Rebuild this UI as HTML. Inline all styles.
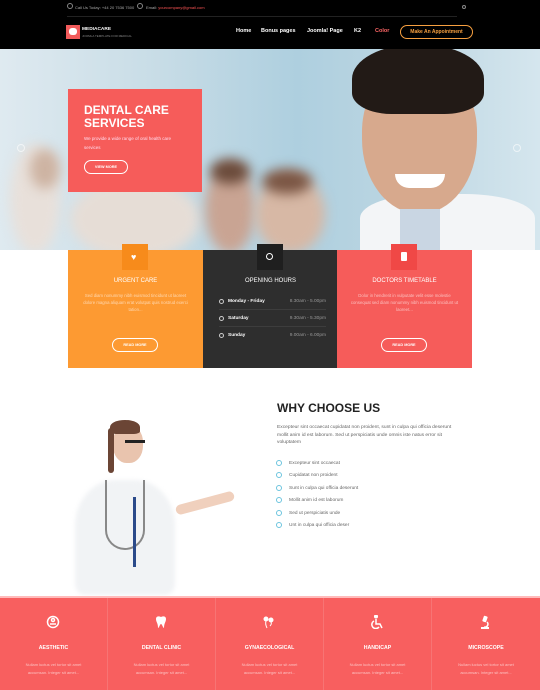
<!DOCTYPE html>
<html><head><meta charset="utf-8"><style>
*{margin:0;padding:0;box-sizing:border-box}
body{width:540px;height:690px;overflow:hidden;font-family:"Liberation Sans",sans-serif;background:#fff;position:relative}
.abs{position:absolute}
.top{left:0;top:0;width:540px;height:49px;background:#000}
.small{font-size:4px;color:#aaa}
.nav a{position:absolute;top:28px;font-size:5.5px;font-weight:bold;color:#fff}
.hero{left:0;top:49px;width:540px;height:201px;background:linear-gradient(90deg,#dfeaf0 0%,#c7dce6 30%,#aecfdf 55%,#bcd6e2 75%,#d5e6ee 100%);overflow:hidden}
.blob{position:absolute;border-radius:50%;filter:blur(6px)}
.card{top:250px;height:118px;width:135px}
.card h4{position:absolute;top:28px;width:100%;text-align:center;color:#fff;font-size:6px;font-weight:normal}
.card p{position:absolute;top:42px;left:12px;right:12px;text-align:center;color:rgba(255,255,255,.6);font-size:4.3px;line-height:7px}
.btn{position:absolute;left:44px;top:88px;width:46px;height:14px;border:1px solid #fff;border-radius:8px;color:#fff;font-size:3.8px;font-weight:bold;text-align:center;line-height:12px}
.ico{position:absolute;top:-6px;left:54px;width:26px;height:26px}
.row{position:absolute;left:16px;right:12px;height:17px;border-bottom:1px solid #3d3d3d;font-size:4.8px;color:#fff;line-height:17px}
.row b{margin-left:9px}.row span{position:absolute;right:0;color:#999}
.row i{position:absolute;left:0;top:6px;width:5px;height:5px;border:1px solid #ccc;border-radius:50%}
.li{position:absolute;left:276px;font-size:4.8px;color:#666}
.li i{position:absolute;left:0;top:-1px;width:6px;height:6px;border:1px solid #6cc4de;border-radius:50%}
.li span{margin-left:13px}
.feat{top:598px;height:92px;width:108px;background:#f85f5f;border-right:1px solid #f77474}
.feat h5{position:absolute;top:47px;width:100%;text-align:center;color:#fff;font-size:5.2px}
.feat p{position:absolute;top:63px;width:100%;text-align:center;color:rgba(255,255,255,.6);font-size:4px;line-height:8px}
.feat svg{position:absolute;left:46px;top:17px}
</style></head><body>
<div class="abs top"></div>
<div class="abs" style="left:67px;top:3px;width:6px;height:6px;border:1px solid #888;border-radius:50%"></div>
<div class="abs small" style="left:75px;top:5px">Call Us Today: +44 20 7536 7500</div>
<div class="abs" style="left:137px;top:3px;width:6px;height:6px;border:1px solid #888;border-radius:50%"></div>
<div class="abs small" style="left:146px;top:5px">Email: <span style="color:#f55">yourcompany@gmail.com</span></div>
<div class="abs" style="left:462px;top:5px;width:4px;height:4px;border:1px solid #888;border-radius:50%"></div>
<div class="abs" style="left:67px;top:16px;width:390px;height:1px;background:#222"></div>
<div class="abs" style="left:66px;top:25px;width:14px;height:14px;background:#f25b5b"></div>
<div class="abs" style="left:69px;top:28px;width:8px;height:7px;background:#fff;border-radius:3px"></div>
<div class="abs" style="left:82px;top:27px;font-size:4.8px;color:#fff;font-weight:bold">MEDIACARE</div>
<div class="abs" style="left:82px;top:34px;font-size:3px;color:#888">JOOMLA TEMPLATE FOR MEDICAL</div>
<div class="nav"><a style="left:236px">Home</a><a style="left:261px">Bonus pages</a><a style="left:307px">Joomla! Page</a><a style="left:354px">K2</a><a style="left:375px;color:#f66">Color</a></div>
<div class="abs" style="left:400px;top:25px;width:73px;height:14px;border:1px solid #f7a040;border-radius:8px;color:#f7a040;font-size:5px;font-weight:bold;text-align:center;line-height:12px">Make An Appointment</div>

<div class="abs hero">
 <div class="blob" style="left:10px;top:95px;width:50px;height:110px;background:#e8e0da"></div>
 <div class="blob" style="left:30px;top:100px;width:30px;height:40px;background:#cdb3a2"></div>
 <div class="blob" style="left:70px;top:130px;width:130px;height:80px;background:#e6ddd6"></div>
 <div class="blob" style="left:205px;top:115px;width:50px;height:90px;background:#c9a493"></div>
 <div class="blob" style="left:210px;top:110px;width:40px;height:25px;background:#6a4a3a"></div>
 <div class="blob" style="left:255px;top:125px;width:70px;height:80px;background:#d7b8a5"></div>
 <div class="blob" style="left:262px;top:120px;width:50px;height:25px;background:#7a5543"></div>
 <div class="abs" style="left:360px;top:145px;width:175px;height:60px;background:#f3f5f7;border-radius:40% 40% 0 0"></div>
 <div class="abs" style="left:362px;top:15px;width:115px;height:150px;background:#d7a98d;border-radius:45% 45% 50% 50%"></div>
 <div class="abs" style="left:352px;top:-5px;width:132px;height:70px;background:#221a16;border-radius:50% 50% 30% 30%"></div>
 <div class="abs" style="left:395px;top:125px;width:50px;height:14px;background:#fff;border-radius:0 0 25px 25px"></div>
 <div class="abs" style="left:400px;top:160px;width:40px;height:45px;background:#c9d6e3"></div>
 <div class="abs" style="left:17px;top:95px;width:8px;height:8px;border:1px solid #fff;border-radius:50%;opacity:.6"></div>
 <div class="abs" style="left:513px;top:95px;width:8px;height:8px;border:1px solid #fff;border-radius:50%;opacity:.6"></div>
</div>
<div class="abs" style="left:68px;top:89px;width:134px;height:103px;background:#f65c5a"></div>
<div class="abs" style="left:84px;top:104px;font-size:12px;line-height:13px;font-weight:bold;color:#fff">DENTAL CARE<br>SERVICES</div>
<div class="abs" style="left:84px;top:134px;font-size:4.5px;line-height:9px;color:#fde">We provide a wide range of oral health care<br>services</div>
<div class="abs" style="left:84px;top:160px;width:44px;height:14px;border:1px solid #fff;border-radius:8px;color:#fff;font-size:3.8px;font-weight:bold;text-align:center;line-height:12px">VIEW MORE</div>

<div class="abs card" style="left:68px;background:#fd9a32">
 <div class="ico" style="background:#f78b1b"><div class="abs" style="left:9px;top:9px;color:#fff;font-size:9px;line-height:8px">♥</div></div>
 <h4>URGENT CARE</h4>
 <p>Sed diam nonummy nibh euismod tincidunt ut laoreet dolore magna aliquam erat volutpat quis nostrud exerci tation...</p>
 <div class="btn">READ MORE</div>
</div>
<div class="abs card" style="left:203px;background:#2e2e2e">
 <div class="ico" style="background:#1f1f1f"><div class="abs" style="left:9px;top:9px;width:7px;height:7px;border:1.5px solid #fff;border-radius:50%"></div></div>
 <h4>OPENING HOURS</h4>
 <div class="row" style="top:43px"><i></i><b>Monday - Friday</b><span>8.30am - 5.00pm</span></div>
 <div class="row" style="top:60px"><i></i><b>Saturday</b><span>9.30am - 5.30pm</span></div>
 <div class="row" style="top:77px;border:none"><i></i><b>Sunday</b><span>9.00am - 6.00pm</span></div>
</div>
<div class="abs card" style="left:337px;background:#f65c5a">
 <div class="ico" style="background:#f04846"><div class="abs" style="left:10px;top:8px;width:6px;height:9px;background:#fff;border-radius:1px"></div></div>
 <h4>DOCTORS TIMETABLE</h4>
 <p>Dolor in hendrerit in vulputate velit esse molestie consequat sed diam nonummy nibh euismod tincidunt ut laoreet...</p>
 <div class="btn">READ MORE</div>
</div>

<!-- nurse -->
<div class="abs" style="left:75px;top:480px;width:100px;height:115px;background:#f1f3f5;border-radius:40% 40% 10% 10%;filter:blur(2px)"></div>
<div class="abs" style="left:113px;top:425px;width:30px;height:38px;background:#e9c4ae;border-radius:45%"></div>
<div class="abs" style="left:110px;top:420px;width:30px;height:14px;background:#6b4535;border-radius:50% 50% 20% 20%"></div>
<div class="abs" style="left:108px;top:428px;width:6px;height:45px;background:#6b4535;border-radius:3px"></div>
<div class="abs" style="left:125px;top:440px;width:20px;height:3px;background:#222"></div>
<div class="abs" style="left:105px;top:480px;width:40px;height:70px;border:2px solid #888;border-top:none;border-radius:0 0 20px 20px"></div>
<div class="abs" style="left:133px;top:497px;width:3px;height:70px;background:#2b4a8a"></div>
<div class="abs" style="left:175px;top:498px;width:60px;height:10px;background:#f0d0bd;border-radius:5px;transform:rotate(-15deg)"></div>

<div class="abs" style="left:277px;top:401px;font-size:12px;font-weight:bold;color:#222">WHY CHOOSE US</div>
<div class="abs" style="left:277px;top:424px;width:186px;font-size:4.9px;line-height:7.5px;color:#666">Excepteur sint occaecat cupidatat non proident, sunt in culpa qui officia deserunt mollit anim id est laborum. Sed ut perspiciatis unde omnis iste natus error sit voluptatem</div>
<div class="li" style="top:461px"><i></i><span>Excepteur sint occaecat</span></div>
<div class="li" style="top:473px"><i></i><span>Cupidatat non proident</span></div>
<div class="li" style="top:486px"><i></i><span>Sunt in culpa qui officia deserunt</span></div>
<div class="li" style="top:498px"><i></i><span>Mollit anim id est laborum</span></div>
<div class="li" style="top:511px"><i></i><span>Sed ut perspiciatis unde</span></div>
<div class="li" style="top:523px"><i></i><span>Unt in culpa qui officia deser</span></div>

<div class="abs" style="left:0;top:596px;width:540px;height:2px;background:#fbb"></div>
<div class="abs feat" style="left:0"><svg width="14" height="14" viewBox="0 0 14 14" fill="none" stroke="#fff" stroke-width="1.5"><circle cx="7" cy="7" r="5.5"/><circle cx="7" cy="5" r="1.5"/><path d="M4 9h6"/></svg><h5>AESTHETIC</h5><p>Nullam luctus vel tortor sit amet<br>accumsan. Integer sit amet...</p></div>
<div class="abs feat" style="left:108px"><svg width="14" height="14" viewBox="0 0 14 14"><path d="M2 4C2 1 5 1 7 2 9 1 12 1 12 4 12 7 10 8 10 13 9 13 8 9 7 9 6 9 5 13 4 13 4 8 2 7 2 4Z" fill="#fff"/></svg><h5>DENTAL CLINIC</h5><p>Nullam luctus vel tortor sit amet<br>accumsan. Integer sit amet...</p></div>
<div class="abs feat" style="left:216px"><svg width="14" height="14" viewBox="0 0 14 14" fill="#fff" stroke="#fff"><circle cx="4" cy="4" r="2"/><circle cx="9" cy="5" r="2"/><path d="M4 6q-1 3 1 7M9 7q1 2-1 4" fill="none" stroke-width="1"/></svg><h5>GYNAECOLOGICAL</h5><p>Nullam luctus vel tortor sit amet<br>accumsan. Integer sit amet...</p></div>
<div class="abs feat" style="left:324px"><svg width="14" height="14" viewBox="0 0 14 14" fill="none" stroke="#fff" stroke-width="1.5"><circle cx="6" cy="1.5" r="1.3" fill="#fff"/><path d="M6 4v5h4l2 4"/><path d="M4 6a4 4 0 1 0 5 6"/></svg><h5>HANDICAP</h5><p>Nullam luctus vel tortor sit amet<br>accumsan. Integer sit amet...</p></div>
<div class="abs feat" style="left:432px;border:none"><svg width="14" height="14" viewBox="0 0 14 14" fill="#fff"><rect x="5" y="1" width="4" height="6" rx="1" transform="rotate(20 7 4)"/><path d="M3 12h8v2H3z"/><path d="M9 7a3 3 0 0 1-3 5" stroke="#fff" fill="none" stroke-width="1.5"/></svg><h5>MICROSCOPE</h5><p>Nullam luctus vel tortor sit amet<br>accumsan. Integer sit amet...</p></div>
</body></html>
